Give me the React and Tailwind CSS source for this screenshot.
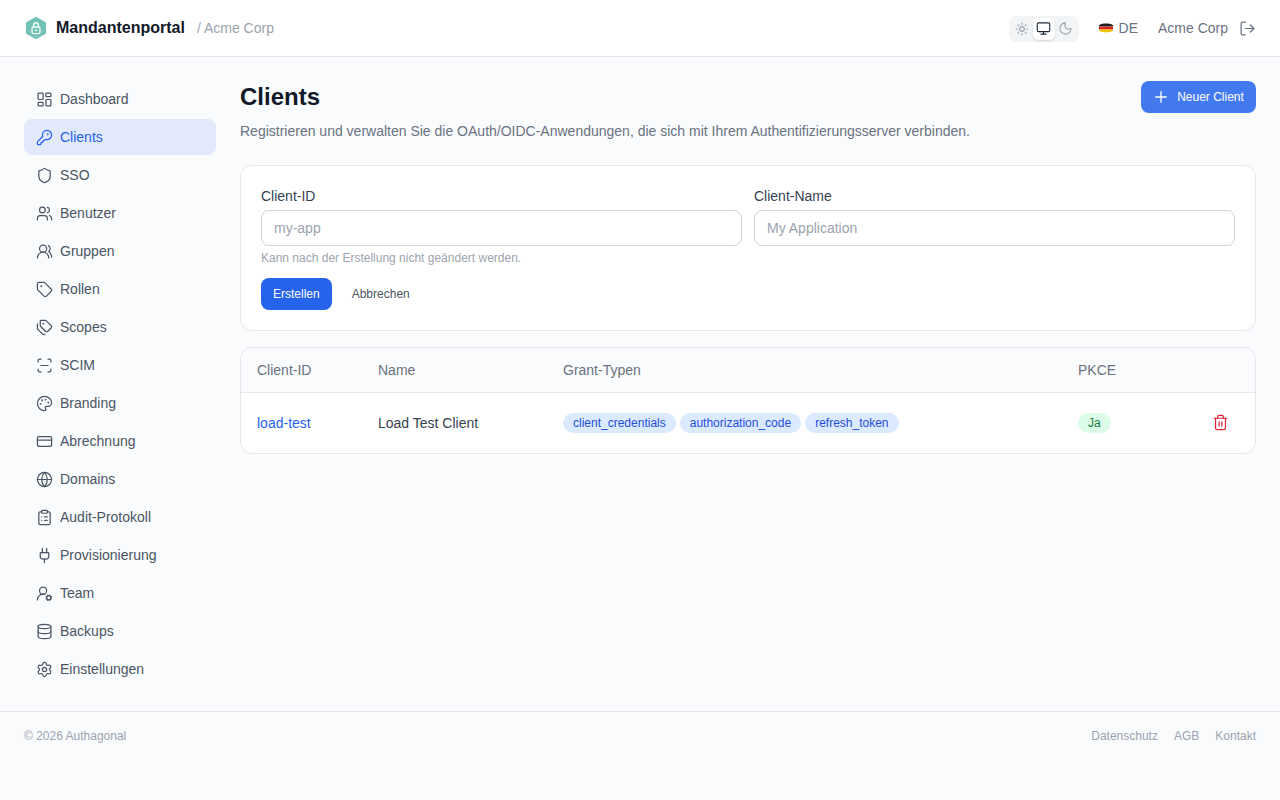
import React from 'react';
import {
  LayoutDashboard, KeyRound, Shield, Users, UsersRound, Tag, Tags, ScanLine, Palette, CreditCard,
  Globe, ClipboardList, Plug, UserRoundCog, Database, Settings, Sun, Monitor, Moon, LogOut, Plus, Trash2,
} from 'lucide-react';

const navItems = [
  { label: 'Dashboard', icon: LayoutDashboard },
  { label: 'Clients', icon: KeyRound, active: true },
  { label: 'SSO', icon: Shield },
  { label: 'Benutzer', icon: Users },
  { label: 'Gruppen', icon: UsersRound },
  { label: 'Rollen', icon: Tag },
  { label: 'Scopes', icon: Tags },
  { label: 'SCIM', icon: ScanLine },
  { label: 'Branding', icon: Palette },
  { label: 'Abrechnung', icon: CreditCard },
  { label: 'Domains', icon: Globe },
  { label: 'Audit-Protokoll', icon: ClipboardList },
  { label: 'Provisionierung', icon: Plug },
  { label: 'Team', icon: UserRoundCog },
  { label: 'Backups', icon: Database },
  { label: 'Einstellungen', icon: Settings },
];

const grants = ['client_credentials', 'authorization_code', 'refresh_token'];

const Logo = () => (
  <svg width="24" height="24" viewBox="0 0 24 24" className="shrink-0">
    <path d="M12 .8 22 6.4V17.6L12 23.2 2 17.6V6.4Z" fill="#70c0b4" />
    <g fill="#a5dcd3">
      <circle cx="5" cy="9" r=".7" />
      <circle cx="5" cy="15" r=".7" />
      <circle cx="19" cy="9" r=".7" />
      <circle cx="19" cy="15" r=".7" />
      <circle cx="12" cy="3.6" r=".7" />
      <circle cx="12" cy="20.4" r=".7" />
    </g>
    <rect x="8" y="11" width="8" height="6.6" rx="1.6" fill="none" stroke="#f0faf8" strokeWidth="1.4" />
    <path d="M9.6 11V9.2a2.4 2.4 0 0 1 4.8 0V11" fill="none" stroke="#f0faf8" strokeWidth="1.4" />
    <circle cx="12" cy="14.3" r="1" fill="#f0faf8" />
  </svg>
);

const Flag = () => (
  <svg width="16" height="12" viewBox="0 0 16 12" className="shrink-0">
    <path d="M1 3.2C3 2 6 1.6 8 1.6s5 .4 7 1.6v1.4H1Z" fill="#1f1f1f" />
    <rect x="1" y="4.6" width="14" height="2.9" fill="#d9231f" />
    <path d="M1 7.5h14v1.3C13 10 10 10.4 8 10.4S3 10 1 8.8Z" fill="#f5c400" />
  </svg>
);

export default function App() {
  return (
    <div className="min-h-[800px] bg-[#f9fbfd] font-['Liberation_Sans',Arial,sans-serif] flex flex-col">
      <header className="h-[57px] bg-white border-b border-[#e5e7eb] px-6 flex items-center justify-between">
        <div className="flex items-center">
          <Logo />
          <span className="ml-2 text-base font-bold text-[#111827]">Mandantenportal</span>
          <span className="ml-3 text-sm text-[#9ca3af]">/ Acme Corp</span>
        </div>
        <div className="flex items-center">
          <div className="flex items-center bg-[#f3f4f6] rounded-lg p-0.5 h-[26px] mt-px">
            <div className="w-[22px] h-[22px] flex items-center justify-center text-[#9ca3af]"><Sun size={14} /></div>
            <div className="w-[22px] h-[22px] flex items-center justify-center bg-white rounded-md shadow-sm text-[#1f2937]"><Monitor size={15} strokeWidth={1.75} /></div>
            <div className="w-[22px] h-[22px] flex items-center justify-center text-[#9ca3af]"><Moon size={15} strokeWidth={1.75} /></div>
          </div>
          <div className="ml-[19px] flex items-center gap-[5px] text-sm text-[#6b7280]"><Flag /><span>DE</span></div>
          <span className="ml-5 text-sm text-[#6b7280]">Acme Corp</span>
          <LogOut size={17} strokeWidth={1.75} className="ml-[11px] text-[#6b7280]" />
        </div>
      </header>

      <div className="flex-1 flex px-6 pt-6 gap-6">
        <nav className="w-[192px] shrink-0 flex flex-col gap-0.5">
          {navItems.map(({ label, icon: Icon, active }) => (
            <div
              key={label}
              className={`h-9 px-3 flex items-center gap-2 rounded-lg text-sm ${active ? 'bg-[#e2e9fb] text-[#2563eb]' : 'text-[#4b5563]'}`}
            >
              <Icon size={17} strokeWidth={1.75} className="shrink-0 -mx-[0.5px]" />
              <span>{label}</span>
            </div>
          ))}
        </nav>

        <main className="flex-1 min-w-0">
          <div className="flex items-start justify-between">
            <div>
              <h1 className="text-2xl leading-8 font-bold text-[#111827]">Clients</h1>
              <p className="mt-2 text-sm text-[#6b7280]">Registrieren und verwalten Sie die OAuth/OIDC-Anwendungen, die sich mit Ihrem Authentifizierungsserver verbinden.</p>
            </div>
            <button className="w-[115px] h-8 rounded-lg bg-[#4279ee] text-white text-xs flex items-center justify-center gap-2">
              <Plus size={18} strokeWidth={1.75} className="-mx-px" />
              <span>Neuer Client</span>
            </button>
          </div>

          <section className="mt-6 bg-white border border-[#e5e7eb] rounded-xl p-5">
            <div className="grid grid-cols-2 gap-3">
              <div>
                <label className="block text-sm leading-5 text-[#374151] mb-1">Client-ID</label>
                <input readOnly placeholder="my-app" className="w-full h-9 px-3 rounded-lg border border-[#d1d5db] bg-white text-sm placeholder:text-[#9ca3af] outline-none" />
                <p className="mt-1 text-xs leading-4 text-[#9ca3af]">Kann nach der Erstellung nicht geändert werden.</p>
              </div>
              <div>
                <label className="block text-sm leading-5 text-[#374151] mb-1">Client-Name</label>
                <input readOnly placeholder="My Application" className="w-full h-9 px-3 rounded-lg border border-[#d1d5db] bg-white text-sm placeholder:text-[#9ca3af] outline-none" />
              </div>
            </div>
            <div className="mt-3 flex items-center gap-2">
              <button className="h-8 px-3 rounded-lg bg-[#2563eb] text-white text-xs">Erstellen</button>
              <button className="h-8 px-3 rounded-lg text-[#4b5563] text-xs">Abbrechen</button>
            </div>
          </section>

          <section className="mt-4 bg-white border border-[#e5e7eb] rounded-xl overflow-hidden">
            <table className="w-full text-sm table-fixed">
              <thead>
                <tr className="h-[44px] bg-[#f9fbfd] border-b border-[#e5e7eb] text-[#6b7280] text-left">
                  <th className="w-[137px] pl-4 font-normal">Client-ID</th>
                  <th className="w-[185px] font-normal">Name</th>
                  <th className="w-[515px] font-normal">Grant-Typen</th>
                  <th className="font-normal">PKCE</th>
                  <th className="w-[70px]"></th>
                </tr>
              </thead>
              <tbody>
                <tr className="h-[61px]">
                  <td className="pl-4 text-[#2563eb]">load-test</td>
                  <td className="text-[#374151]">Load Test Client</td>
                  <td>
                    <div className="flex gap-1">
                      {grants.map((g) => (
                        <span key={g} className="h-5 px-2.5 rounded-full bg-[#dbeafe] text-[#1d4ed8] text-xs leading-5">{g}</span>
                      ))}
                    </div>
                  </td>
                  <td>
                    <span className="inline-block h-5 px-2.5 rounded-full bg-[#dcfce7] text-[#15803d] text-xs leading-5">Ja</span>
                  </td>
                  <td>
                    <Trash2 size={17} strokeWidth={1.75} className="ml-[27px] text-[#e02336]" />
                  </td>
                </tr>
              </tbody>
            </table>
          </section>
        </main>
      </div>

      <footer className="h-[89px] mt-6 border-t border-[#e5e7eb] px-6 pt-4 flex items-start justify-between text-xs leading-4 text-[#9ca3af]">
        <span>© 2026 Authagonal</span>
        <div className="flex gap-4">
          <span>Datenschutz</span>
          <span>AGB</span>
          <span>Kontakt</span>
        </div>
      </footer>
    </div>
  );
}
